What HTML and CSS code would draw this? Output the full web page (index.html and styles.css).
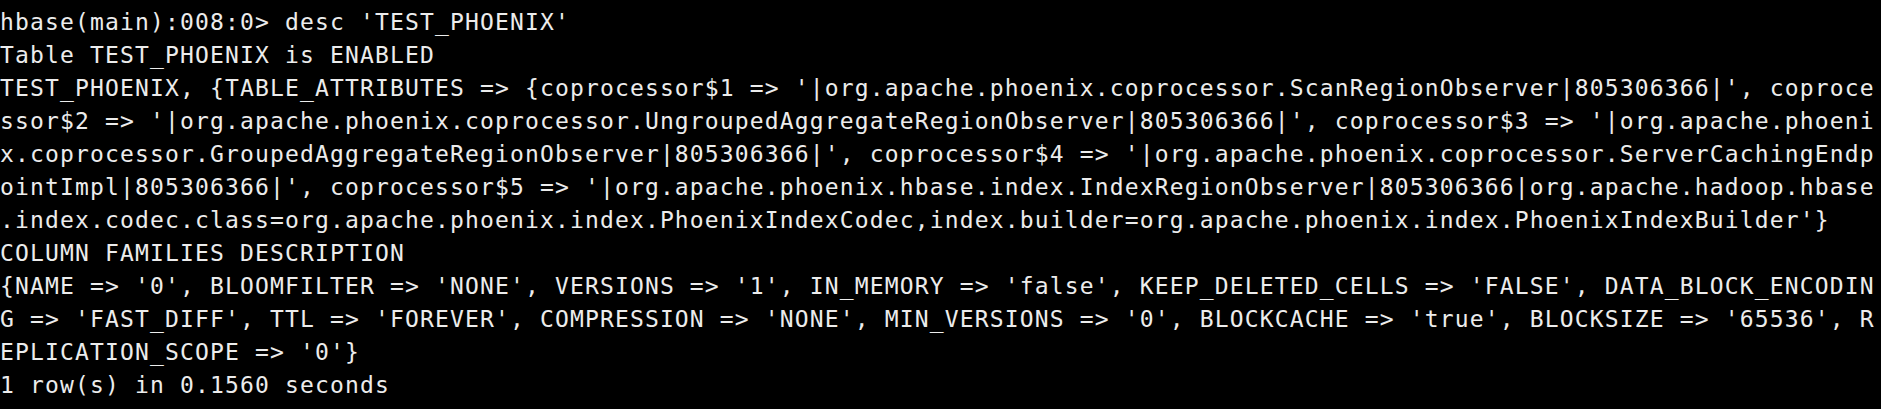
FILE: index.html
```html
<!DOCTYPE html>
<html>
<head>
<meta charset="utf-8">
<link rel="stylesheet" href="styles.css">
</head>
<body>
<pre class="term">hbase(main):008:0&gt; desc 'TEST_PHOENIX'
Table TEST_PHOENIX is ENABLED
TEST_PHOENIX, {TABLE_ATTRIBUTES =&gt; {coprocessor$1 =&gt; '|org.apache.phoenix.coprocessor.ScanRegionObserver|805306366|', coproce
ssor$2 =&gt; '|org.apache.phoenix.coprocessor.UngroupedAggregateRegionObserver|805306366|', coprocessor$3 =&gt; '|org.apache.phoeni
x.coprocessor.GroupedAggregateRegionObserver|805306366|', coprocessor$4 =&gt; '|org.apache.phoenix.coprocessor.ServerCachingEndp
ointImpl|805306366|', coprocessor$5 =&gt; '|org.apache.phoenix.hbase.index.IndexRegionObserver|805306366|org.apache.hadoop.hbase
.index.codec.class=org.apache.phoenix.index.PhoenixIndexCodec,index.builder=org.apache.phoenix.index.PhoenixIndexBuilder'}
COLUMN FAMILIES DESCRIPTION
{NAME =&gt; '0', BLOOMFILTER =&gt; 'NONE', VERSIONS =&gt; '1', IN_MEMORY =&gt; 'false', KEEP_DELETED_CELLS =&gt; 'FALSE', DATA_BLOCK_ENCODIN
G =&gt; 'FAST_DIFF', TTL =&gt; 'FOREVER', COMPRESSION =&gt; 'NONE', MIN_VERSIONS =&gt; '0', BLOCKCACHE =&gt; 'true', BLOCKSIZE =&gt; '65536', R
EPLICATION_SCOPE =&gt; '0'}
1 row(s) in 0.1560 seconds</pre>
</body>
</html>
```
FILE: styles.css
```css
html, body {
  margin: 0;
  padding: 0;
  background: #000;
  height: 100%;
  overflow: hidden;
}
.term {
  margin: 0;
  padding: 6px 0 0 0;
  font-family: "DejaVu Sans Mono", "Liberation Mono", monospace;
  font-size: 23px;
  letter-spacing: 1.15px;
  line-height: 33px;
  color: #ececec;
  white-space: pre;
}
```
